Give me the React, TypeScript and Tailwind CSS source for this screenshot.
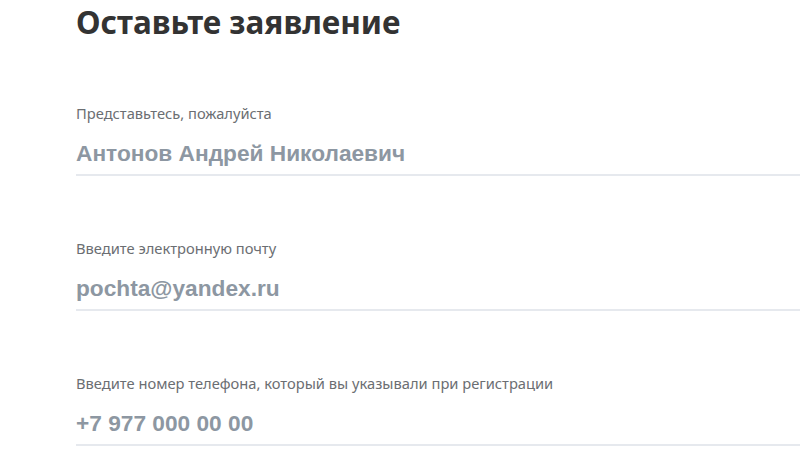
const fields = [
  { label: "Представьтесь, пожалуйста", value: "Антонов Андрей Николаевич" },
  { label: "Введите электронную почту", value: "pochta@yandex.ru" },
  { label: "Введите номер телефона, который вы указывали при регистрации", value: "+7 977 000 00 00" },
]

function Field({ label, value }: { label: string; value: string }) {
  return (
    <div className="pt-[62px]">
      <label className="block h-[20px] text-[14.7px] leading-[20px] text-[#6b6e72] font-['Noto_Sans',sans-serif]">
        {label}
      </label>
      <div className="mt-[15px] border-b-2 border-[#e6e9ee] pb-[6px]">
        <input
          readOnly
          value={value}
          className="block h-[30px] w-full bg-transparent text-[22.7px] font-bold leading-[30px] text-[#8d97a2] outline-none font-['Liberation_Sans',Arial,sans-serif]"
        />
      </div>
    </div>
  )
}

export default function App() {
  return (
    <div className="min-h-[469px] bg-white pl-[76px]">
      <h1 className="h-[41px] text-[31.5px] font-bold leading-[44px] text-[#333333] font-['Noto_Sans',sans-serif]">
        Оставьте заявление
      </h1>
      {fields.map((field) => (
        <Field key={field.label} label={field.label} value={field.value} />
      ))}
    </div>
  )
}
